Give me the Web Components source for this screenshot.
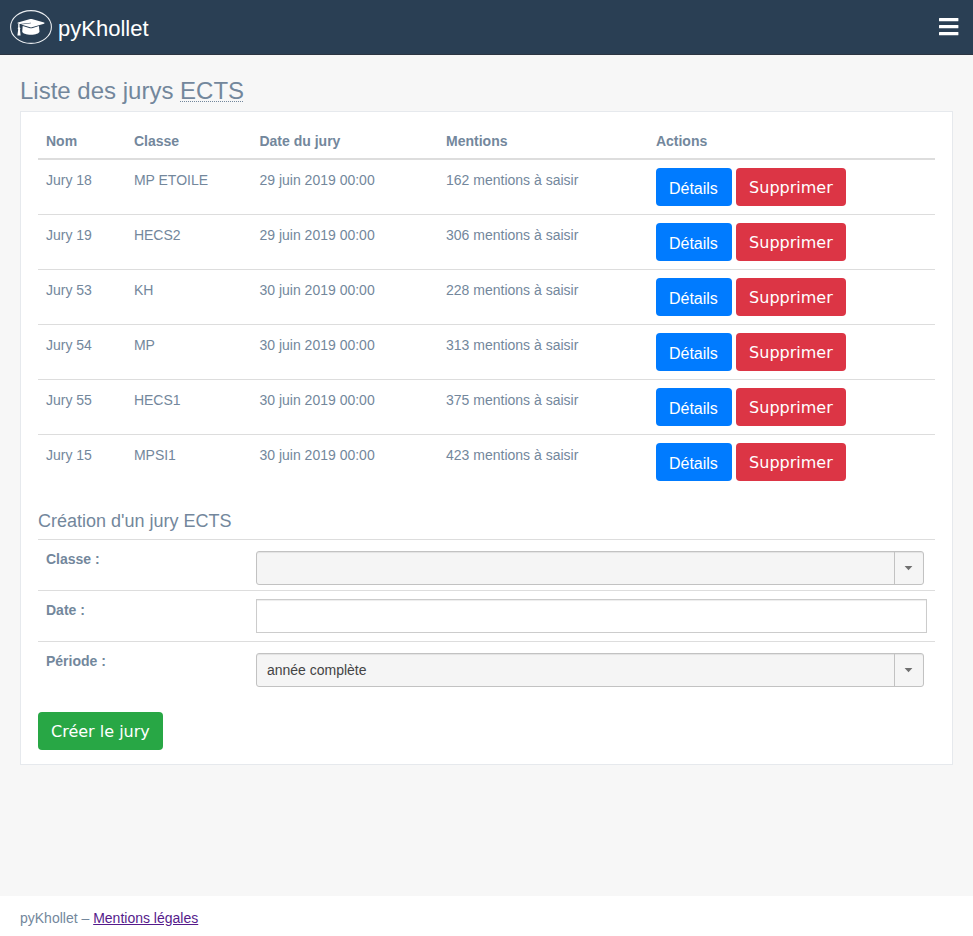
<!DOCTYPE html>
<html lang="fr">
<head>
<meta charset="utf-8">
<meta name="viewport" content="width=device-width, initial-scale=1">
<title>pyKhollet – Jurys ECTS</title>
<style>
  body {
    margin: 0;
    font-family: "Liberation Sans", sans-serif;
    font-size: 14px;
    line-height: 24px;
    color: #73879c;
    background: #f7f7f7;
    --line: #dddddd;
    --button-font: "DejaVu Sans", sans-serif;
  }
</style>
</head>
<body>
<page-shell>
  <site-header slot="header" name="pyKhollet"></site-header>
  <page-title>Liste des jurys <abbr title="European Credit Transfer System">ECTS</abbr></page-title>
  <content-card>
    <jury-table></jury-table>
    <jury-form heading="Création d'un jury ECTS"></jury-form>
  </content-card>
  <site-footer slot="footer">pyKhollet – <a href="#mentions">Mentions légales</a></site-footer>
</page-shell>

<script>
const define = (name, html, setup) => {
  const template = document.createElement('template');
  template.innerHTML = html;
  customElements.define(name, class extends HTMLElement {
    constructor() {
      super();
      this.attachShadow({ mode: 'open' }).append(template.content.cloneNode(true));
    }
    connectedCallback() {
      if (setup && !this.ready) { this.ready = true; setup(this, this.shadowRoot); }
    }
  });
};

define('page-shell', `
  <style>
    :host { display: flex; flex-direction: column; min-height: 100vh; }
    main { flex: 1; padding: 20px; }
  </style>
  <slot name="header"></slot>
  <main><slot></slot></main>
  <slot name="footer"></slot>`);

define('site-header', `
  <style>
    :host { display: block; background: #2a3f54; border-bottom: 1px solid #2c3542; color: #fff; }
    header { display: flex; align-items: center; justify-content: space-between; height: 54px; padding: 0 14px 0 10px; }
    a { display: flex; align-items: center; gap: 6px; color: #fff; text-decoration: none; font-size: 22px; line-height: 32px; }
    button { display: flex; padding: 0; border: 0; background: none; color: #fff; cursor: pointer; }
    svg { display: block; }
    .name { padding-top: 4px; }
  </style>
  <header>
    <a href="#accueil">
      <svg width="42" height="34" viewBox="0 0 42 34" aria-hidden="true">
        <ellipse cx="21" cy="17" rx="20.4" ry="16.4" fill="none" stroke="#eceff2" stroke-width="1.1"/>
        <g fill="#fff">
          <path d="M20.2 9.1Q21 8.9 21.8 9.1L34 12.5Q35.4 13.1 34 13.7L21.8 17.3Q21 17.5 20.2 17.3L11 14.6L20.9 13.2V12.7L10 13.9Q9 14.2 8.9 15.3L8.2 15.1Q8.2 14.2 9 13.8L7.8 13.6Q6.8 13 8 12.5Z"/>
          <path d="M12.7 16L20 18.2Q21 18.4 22 18.2L28.9 16L29.5 21.6C29.3 23.6 25.6 24.8 21 24.8S12.4 23.6 12.2 21.6Z"/>
          <path d="M8.2 14.5H9.6V17.2Q11 18 10 19.4L10.6 25.6H7.4L8.2 19.4Q7.2 18 8.2 17.2Z"/>
        </g>
      </svg>
      <span class="name"></span>
    </a>
    <button type="button" aria-label="Menu">
      <svg width="22" height="20" viewBox="0 0 22 20" aria-hidden="true" fill="currentColor">
        <rect x="2" y="1" width="19.4" height="3.3" rx="0.5"/><rect x="2" y="8" width="19.4" height="3.3" rx="0.5"/><rect x="2" y="15" width="19.4" height="3.3" rx="0.5"/>
      </svg>
    </button>
  </header>`, (host, root) => {
    root.querySelector('.name').textContent = host.getAttribute('name');
  });

define('page-title', `
  <style>
    :host { display: block; }
    h1 { margin: 0 0 4px; font-size: 24px; line-height: 32px; font-weight: 400; }
    ::slotted(abbr) { text-decoration: underline dotted 1px; text-underline-offset: 2px; text-decoration-skip-ink: none; }
  </style>
  <h1><slot></slot></h1>`);

define('content-card', `
  <style>
    :host { display: block; padding: 10px 17px 14px; background: #fff; border: 1px solid #e6e9ed; }
  </style>
  <slot></slot>`);

define('site-footer', `
  <style>
    :host { display: block; padding: 10px 20px 6px; background: #fff; }
    ::slotted(a) { color: #551a8b; }
  </style>
  <footer><slot></slot></footer>`);

define('action-button', `
  <style>
    :host { display: block; }
    a, button {
      display: block; box-sizing: border-box; margin: 0; padding: 7px 12px 5px;
      border: 1px solid transparent; border-radius: 4px;
      font-size: 16px; line-height: 24px; white-space: nowrap;
      color: #fff; background: var(--tone); text-decoration: none; cursor: pointer;
    }
    a { min-width: 76px; padding: 8px 12px 4px; }
    button { min-width: 110px; font-family: var(--button-font); }
    :host { --tone: #007bff; }
    :host([tone="danger"]) { --tone: #dc3545; }
    :host([tone="success"]) { --tone: #28a745; }
  </style>`, (host, root) => {
    const href = host.getAttribute('href');
    const control = document.createElement(href ? 'a' : 'button');
    if (href) control.href = href; else control.type = 'button';
    control.append(document.createElement('slot'));
    root.append(control);
  });

define('jury-table', `
  <style>
    :host { display: block; }
    table { width: 100%; table-layout: fixed; border-collapse: separate; border-spacing: 0; }
    th, td { box-sizing: border-box; padding: 8px; text-align: left; vertical-align: top; }
    th { padding: 7px 8px 5px; border-bottom: 2px solid var(--line); }
    tr + tr td { border-top: 1px solid var(--line); }
    .nom { width: 9.8%; } .classe { width: 14%; } .date { width: 20.8%; } .mentions { width: 23.4%; }
    .actions { display: flex; gap: 4px; }
  </style>
  <table>
    <thead><tr>
      <th class="nom" scope="col">Nom</th><th class="classe" scope="col">Classe</th>
      <th class="date" scope="col">Date du jury</th><th class="mentions" scope="col">Mentions</th>
      <th scope="col">Actions</th>
    </tr></thead>
    <tbody></tbody>
  </table>`, (host, root) => {
    const rows = [
      [18, 'MP ETOILE', 29, 162], [19, 'HECS2', 29, 306], [53, 'KH', 30, 228],
      [54, 'MP', 30, 313], [55, 'HECS1', 30, 375], [15, 'MPSI1', 30, 423]
    ];
    root.querySelector('tbody').innerHTML = rows.map(([id, classe, day, count]) => `
      <tr><td>Jury ${id}</td><td>${classe}</td><td>${day} juin 2019 00:00</td><td>${count} mentions à saisir</td>
      <td><div class="actions"><action-button href="#jury-${id}">Détails</action-button><action-button tone="danger">Supprimer</action-button></div></td></tr>`).join('');
  });

define('field-row', `
  <style>
    :host { display: grid; grid-template-columns: 23.4% 1fr; min-height: 50px; border-top: 1px solid var(--line); }
    .label, .control { padding: 8px; }
    .control { padding-bottom: 0; }
    .label { padding-top: 7px; font-weight: 700; }
    :host([select]) .control { display: grid; padding: 11px 11px 0 8px; }
    ::slotted(input), ::slotted(select) {
      display: block; box-sizing: border-box; width: 100%; height: 34px; margin: 0; padding: 0 10px;
      border: 1px solid #ccc; border-radius: 0; font: inherit; color: #444; background: #fff;
      box-shadow: inset 0 1px 1px rgba(0, 0, 0, .075);
    }
    ::slotted(select) { grid-area: 1 / 1; appearance: none; border-color: #c2c2c2; border-radius: 3px; background: #f5f5f5; }
    svg { display: none; grid-area: 1 / 1; justify-self: end; z-index: 1; pointer-events: none; }
    :host([select]) svg { display: block; }
  </style>
  <div class="label"><slot name="label"></slot></div>
  <div class="control"><slot></slot>
    <svg width="30" height="34" viewBox="0 0 30 34" aria-hidden="true">
      <path d="M.5 1V33" stroke="#c2c2c2"/><path d="M10.6 15H18.4L14.5 19.2Z" fill="#707070"/>
    </svg>
  </div>`);

define('jury-form', `
  <style>
    :host { display: block; padding-top: 20px; }
    h2 { margin: 0 0 6px; font-size: 18px; line-height: 24px; font-weight: 400; }
    action-button { display: inline-block; vertical-align: top; margin-top: 20px; }
  </style>
  <h2></h2>
  <form>
    <field-row select><label slot="label" for="classe">Classe :</label>
      <select id="classe" name="classe"><option value="" aria-label="Aucune classe"></option><option>MP ETOILE</option><option>HECS2</option><option>KH</option></select></field-row>
    <field-row><label slot="label" for="date">Date :</label><input id="date" name="date" type="text"></field-row>
    <field-row select><label slot="label" for="periode">Période :</label>
      <select id="periode" name="periode"><option>année complète</option></select></field-row>
    <action-button tone="success">Créer le jury</action-button>
  </form>`, (host, root) => {
    root.querySelector('h2').textContent = host.getAttribute('heading');
  });
</script>
</body>
</html>
